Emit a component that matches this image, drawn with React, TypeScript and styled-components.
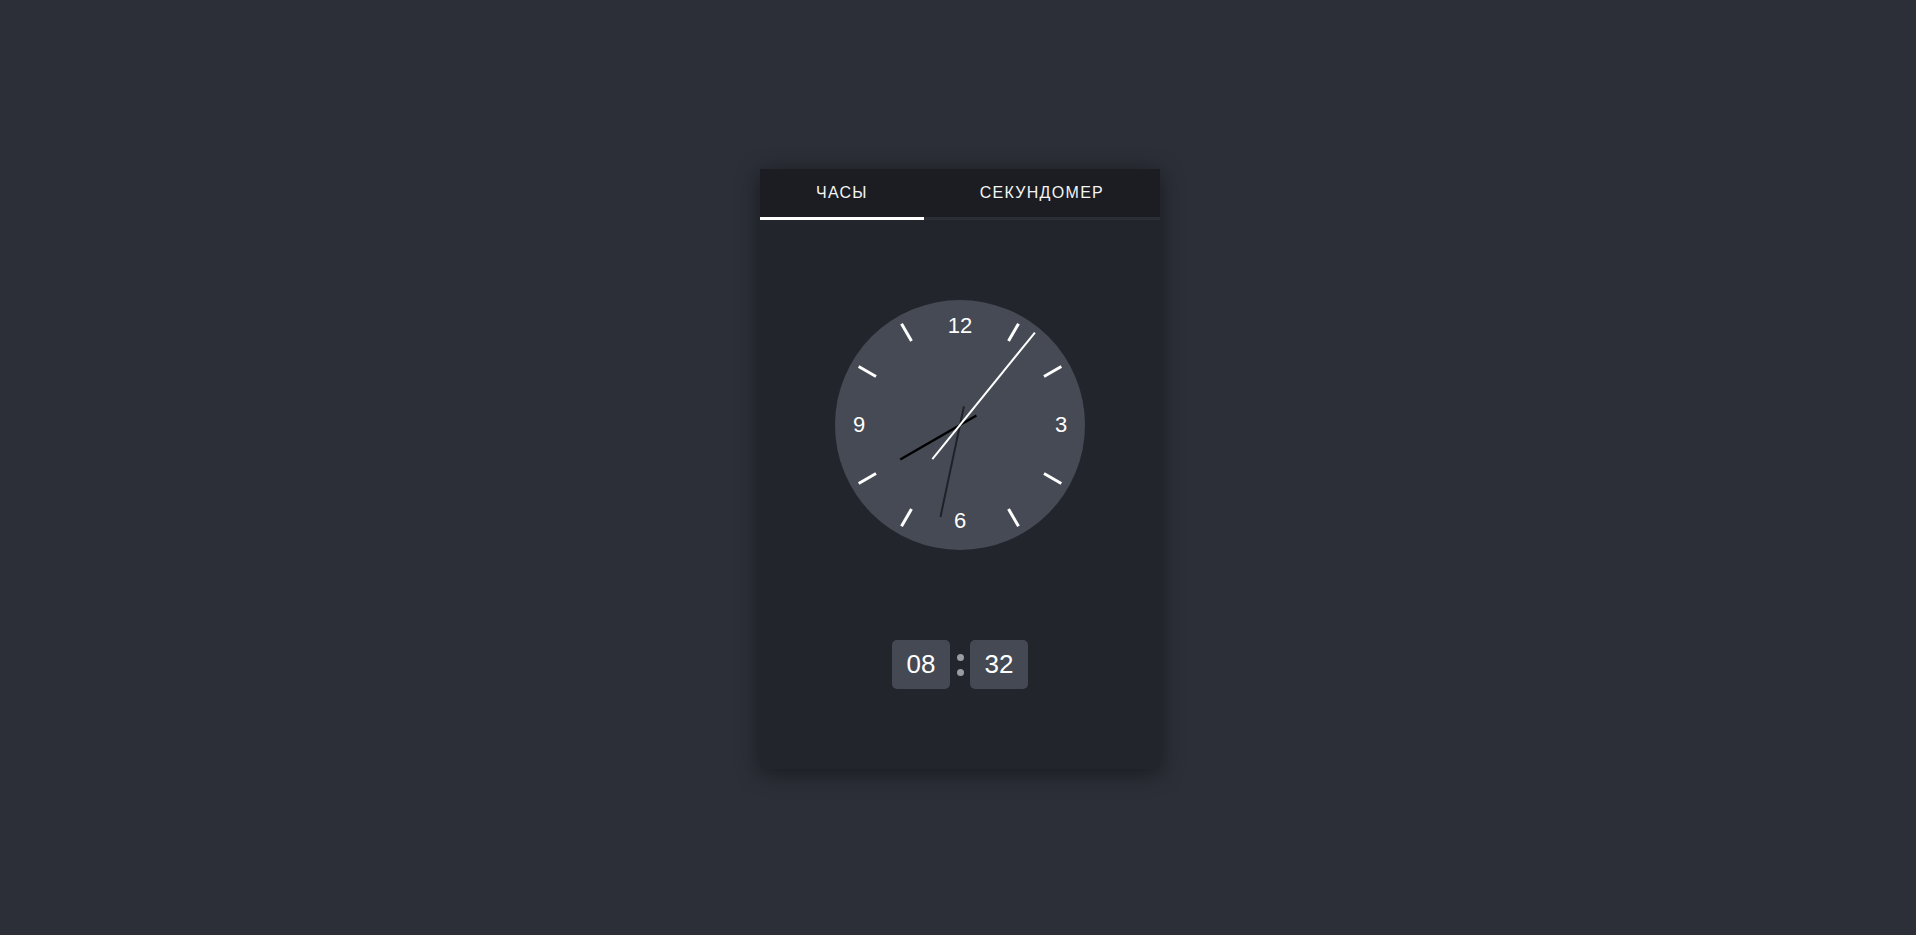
import React, { FC, useState } from "react";
import styled, { createGlobalStyle } from "styled-components";

const GlobalStyle = createGlobalStyle`
  * {
    box-sizing: border-box;
  }
  html, body {
    margin: 0;
    padding: 0;
    background: #2c2f38;
    font-family: "Liberation Sans", Arial, sans-serif;
  }
`;

const CX = 125;
const CY = 125;

const polar = (deg: number, r: number) => {
  const a = ((deg - 90) * Math.PI) / 180;
  return { x: CX + r * Math.cos(a), y: CY + r * Math.sin(a) };
};

interface HandProps {
  angle: number;
  length: number;
  tail: number;
  color: string;
  width: number;
}

const Hand: FC<HandProps> = ({ angle, length, tail, color, width }) => {
  const tip = polar(angle, length);
  const end = polar(angle + 180, tail);
  return (
    <line
      x1={end.x}
      y1={end.y}
      x2={tip.x}
      y2={tip.y}
      stroke={color}
      strokeWidth={width}
    />
  );
};

const numbers = [
  { label: "12", deg: 0, r: 99 },
  { label: "3", deg: 90, r: 101 },
  { label: "6", deg: 180, r: 96 },
  { label: "9", deg: 270, r: 101 },
];

const AnalogClock: FC<{ hours: number; minutes: number; seconds: number }> = ({
  hours,
  minutes,
  seconds,
}) => {
  const ticks = Array.from({ length: 12 }, (_, i) => i * 30).filter(
    (d) => d % 90 !== 0
  );
  return (
    <ClockFace viewBox="0 0 250 250" width={250} height={250}>
      <circle cx={CX} cy={CY} r={125} fill="#454a54" />
      {ticks.map((d) => {
        const a = polar(d, 97);
        const b = polar(d, 117);
        return (
          <line
            key={d}
            x1={a.x}
            y1={a.y}
            x2={b.x}
            y2={b.y}
            stroke="#ffffff"
            strokeWidth={3}
          />
        );
      })}
      {numbers.map((n) => {
        const p = polar(n.deg, n.r);
        return (
          <ClockNumber key={n.label} x={p.x} y={p.y - 1}>
            {n.label}
          </ClockNumber>
        );
      })}
      <Hand angle={(hours % 12) * 30} length={69} tail={19} color="#000000" width={2.4} />
      <Hand angle={minutes * 6} length={94} tail={19} color="#1e2128" width={2} />
      <Hand angle={seconds * 6} length={119} tail={44} color="#ffffff" width={2} />
    </ClockFace>
  );
};

const pad = (n: number) => String(n).padStart(2, "0");

export default function App() {
  const [tab, setTab] = useState(0);
  const hours = 8;
  const minutes = 32;
  const seconds = 6.5;

  return (
    <>
      <GlobalStyle />
      <Page>
        <Card>
          <Tabs>
            <Tab $active={tab === 0} onClick={() => setTab(0)}>
              ЧАСЫ
            </Tab>
            <Tab $active={tab === 1} onClick={() => setTab(1)}>
              СЕКУНДОМЕР
            </Tab>
          </Tabs>
          <Body>
            <AnalogClock hours={hours} minutes={minutes} seconds={seconds} />
            <Digital>
              <DigitBox>{pad(hours)}</DigitBox>
              <Colon>
                <Dot />
                <Dot />
              </Colon>
              <DigitBox>{pad(minutes)}</DigitBox>
            </Digital>
          </Body>
        </Card>
      </Page>
    </>
  );
}

const Page = styled.div`
  min-height: 935px;
  display: flex;
  align-items: center;
  justify-content: center;
  padding: 3px 0 0 4px;
`;

const Card = styled.div`
  width: 400px;
  height: 600px;
  display: flex;
  flex-direction: column;
  background: #22252c;
  box-shadow: 0 4px 22px rgba(0, 0, 0, 0.45);
`;

const Tabs = styled.div`
  display: flex;
  background: #1b1d22;
`;

const Tab = styled.button<{ $active: boolean }>`
  flex: 1 1 auto;
  height: 51px;
  padding: 0;
  border: none;
  border-bottom: 3px solid ${(p) => (p.$active ? "#ffffff" : "#2b2e35")};
  background: transparent;
  color: #f4f4f4;
  font-family: "Liberation Sans", Arial, sans-serif;
  font-size: 16px;
  letter-spacing: 1.3px;
  cursor: pointer;
`;

const Body = styled.div`
  flex: 1;
  display: flex;
  flex-direction: column;
  align-items: center;
  padding-top: 80px;
  gap: 90px;
`;

const ClockFace = styled.svg`
  display: block;
`;

const ClockNumber = styled.text`
  fill: #ffffff;
  font-family: "Liberation Sans", Arial, sans-serif;
  font-size: 22px;
  text-anchor: middle;
  dominant-baseline: central;
`;

const Digital = styled.div`
  display: flex;
  align-items: center;
`;

const DigitBox = styled.div`
  width: 58px;
  height: 49px;
  display: flex;
  align-items: center;
  justify-content: center;
  border-radius: 5px;
  background: #444954;
  color: #ffffff;
  font-size: 26px;
`;

const Colon = styled.div`
  width: 20px;
  display: flex;
  flex-direction: column;
  align-items: center;
  gap: 8px;
`;

const Dot = styled.span`
  width: 7px;
  height: 7px;
  border-radius: 50%;
  background: #9a9ca3;
`;
